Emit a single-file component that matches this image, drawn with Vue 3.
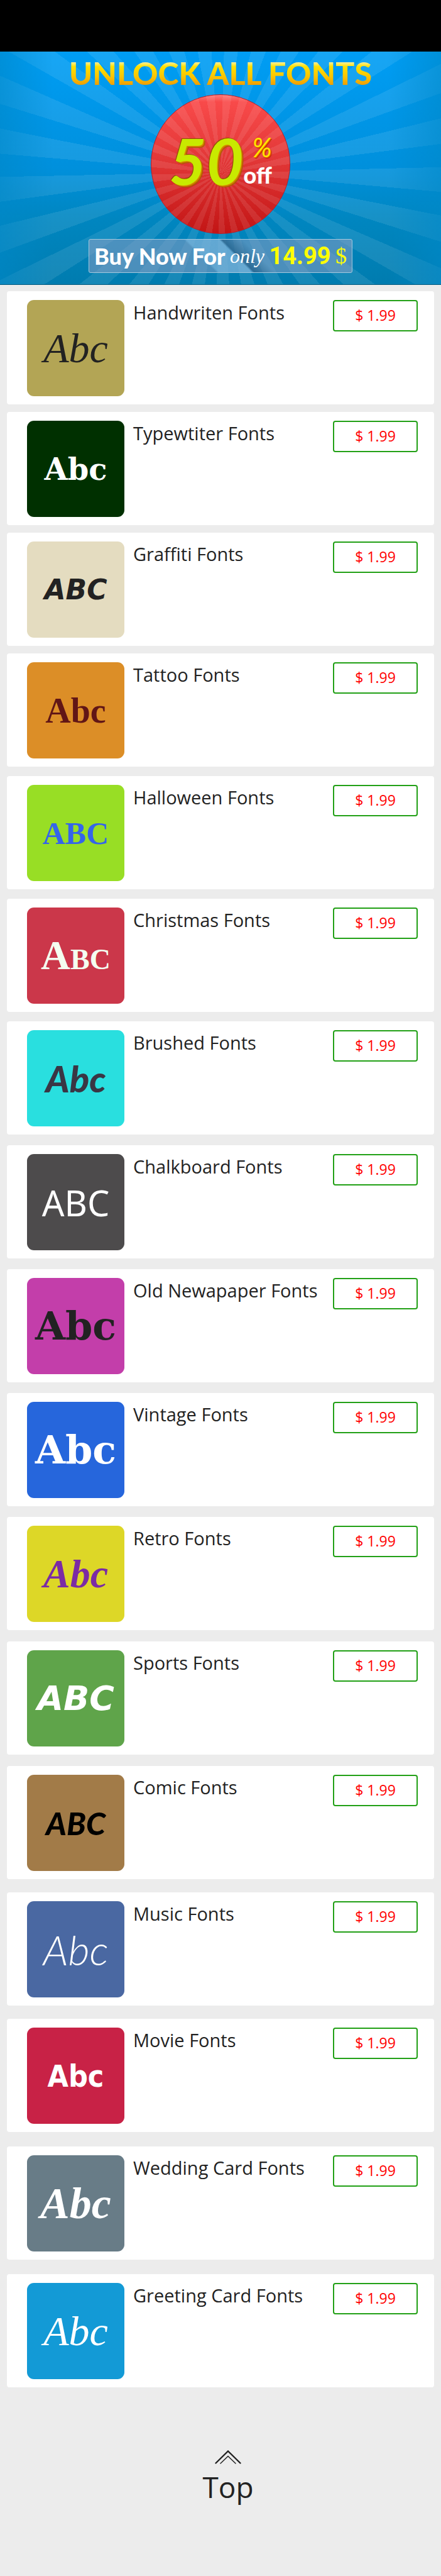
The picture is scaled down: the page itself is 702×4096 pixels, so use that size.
<script setup>
const fonts = [
  { name: 'Handwriten Fonts', sample: 'Abc', style: 'handwritten' },
  { name: 'Typewtiter Fonts', sample: 'Abc', style: 'typewriter' },
  { name: 'Graffiti Fonts', sample: 'ABC', style: 'graffiti' },
  { name: 'Tattoo Fonts', sample: 'Abc', style: 'tattoo' },
  { name: 'Halloween Fonts', sample: 'ABC', style: 'halloween' },
  { name: 'Christmas Fonts', sample: 'Abc', style: 'christmas' },
  { name: 'Brushed Fonts', sample: 'Abc', style: 'brushed' },
  { name: 'Chalkboard Fonts', sample: 'ABC', style: 'chalkboard' },
  { name: 'Old Newapaper Fonts', sample: 'Abc', style: 'newspaper' },
  { name: 'Vintage Fonts', sample: 'Abc', style: 'vintage' },
  { name: 'Retro Fonts', sample: 'Abc', style: 'retro' },
  { name: 'Sports Fonts', sample: 'ABC', style: 'sports' },
  { name: 'Comic Fonts', sample: 'ABC', style: 'comic' },
  { name: 'Music Fonts', sample: 'Abc', style: 'music' },
  { name: 'Movie Fonts', sample: 'Abc', style: 'movie' },
  { name: 'Wedding Card Fonts', sample: 'Abc', style: 'wedding' },
  { name: 'Greeting Card Fonts', sample: 'Abc', style: 'greeting' },
]
const price = '$ 1.99'
</script>

<template>
  <div class="page" id="top">
    <div class="status-bar"></div>

    <header class="banner">
      <h1 class="headline">UNLOCK ALL FONTS</h1>
      <div class="badge">
        <span class="amount">50</span>
        <span class="unit">
          <span class="percent">%</span>
          <span class="off">off</span>
        </span>
      </div>
      <button class="buy" type="button">
        <span class="buy-text">Buy Now For</span>
        <span class="buy-only">only</span>
        <span class="buy-price">14.99</span>
        <span class="buy-dollar">$</span>
      </button>
    </header>

    <main class="list">
      <article v-for="font in fonts" :key="font.name" class="card">
        <div class="tile" :class="font.style">{{ font.sample }}</div>
        <h2 class="name">{{ font.name }}</h2>
        <button class="price" type="button">{{ price }}</button>
      </article>
    </main>

    <footer class="footer">
      <a class="to-top" href="#top">
        <svg class="chevrons" viewBox="0 0 42 22" aria-hidden="true">
          <path d="M1.5 20.5 21 1.5l19.500 19" stroke-width="2.400" />
          <path d="M9 21 21 9.500 33 21" stroke-width="1.500" />
        </svg>
        Top
      </a>
    </footer>
  </div>
</template>

<style>
body {
  margin: 0;
  background: #ececec;
}
</style>

<style scoped>
.page {
  font-family: "Open Sans", "Noto Sans", sans-serif;
  color: #222;
  background: #ececec;
}

.status-bar {
  height: 82px;
  background: #000;
}

/* Banner */
.banner {
  display: flex;
  flex-direction: column;
  align-items: center;
  box-sizing: border-box;
  height: 371px;
  padding-top: 2px;
  border-bottom: 1px solid #00587d;
  background:
    linear-gradient(90deg, rgba(0, 136, 200, 0.6), transparent 12%, transparent 88%, rgba(0, 136, 200, 0.6)),
    repeating-conic-gradient(from 1.8deg at 50% 192px, rgba(255, 255, 255, 0.09) 0deg 6.4deg, transparent 6.4deg 12.41deg),
    linear-gradient(#009df4, #0090dc 50%, #0086c0 72%, #007caf);
}

.headline {
  margin: 0;
  padding-bottom: 2px;
  font-family: Lato, sans-serif;
  font-size: 50px;
  font-weight: 900;
  line-height: 64px;
  white-space: nowrap;
  color: transparent;
  background: linear-gradient(#fff3b0 14px, #ffe000 22px, #fbc400 38px, #f0a000 50px, #f39a00 54px);
  background-clip: text;
  -webkit-background-clip: text;
}

.badge {
  display: flex;
  align-items: center;
  justify-content: center;
  box-sizing: border-box;
  width: 222px;
  height: 222px;
  padding-bottom: 12px;
  border: 1px solid #b3202c;
  border-radius: 50%;
  background:
    linear-gradient(rgba(255, 255, 255, 0.25), transparent 5%),
    repeating-conic-gradient(from 1.8deg at 50% 124px, rgba(255, 255, 255, 0.09) 0deg 6.4deg, transparent 6.4deg 12.41deg),
    linear-gradient(#fb4c4c, #e33838 45%, #c31515);
}

.amount {
  font-family: Lato, sans-serif;
  font-size: 102px;
  font-weight: 700;
  font-style: italic;
  line-height: 102px;
  color: #c8ea00;
  text-shadow: 1px 1px 0 #d88a00, 2px 2px 0 #c87400, 3px 3px 1px #a85a00, -1px -1px 1px #8a5000;
}

.unit {
  display: flex;
  flex-direction: column;
  align-items: flex-end;
  font-family: Lato, sans-serif;
}

.percent {
  font-size: 42px;
  font-style: italic;
  line-height: 46px;
  color: #ffe600;
  text-shadow: 1px 1px 0 #f05a00, 2px 2px 1px #b03000;
}

.off {
  font-size: 36px;
  font-weight: 900;
  line-height: 42px;
  color: #fff;
}

.buy {
  display: flex;
  align-items: center;
  justify-content: space-between;
  box-sizing: border-box;
  width: 420px;
  height: 54px;
  margin-top: 8px;
  padding: 0 8px;
  border: 1px solid #a4c8de;
  border-radius: 3px;
  background:
    linear-gradient(45deg, transparent 43%, rgba(120, 190, 230, 0.5) 44% 55%, rgba(20, 80, 120, 0.55) 56%, transparent 63%),
    rgba(150, 160, 195, 0.5);
  color: #fff;
  white-space: nowrap;
}

.buy-text {
  font-family: Lato, sans-serif;
  font-size: 36px;
  font-weight: 900;
}

.buy-only {
  font-family: "Liberation Serif", serif;
  font-size: 32px;
  font-style: italic;
}

.buy-price {
  font-family: Roboto, sans-serif;
  font-size: 38px;
  font-weight: 700;
  color: #ff0;
}

.buy-dollar {
  font-family: "Liberation Serif", serif;
  font-size: 36px;
  color: #ff0;
}

/* Font packs */
.list {
  padding: 10px 11px 0;
}

.card {
  display: flex;
  align-items: flex-start;
  box-sizing: border-box;
  height: 180px;
  margin-bottom: 12px;
  padding: 14px 26px 0 32px;
  border-radius: 4px;
  background: #fff;
}

.card:nth-child(n + 4) {
  margin-bottom: 15px;
}

.card:nth-child(n + 7) {
  margin-bottom: 17px;
}

.card:nth-child(n + 11) {
  margin-bottom: 18px;
}

.card:nth-child(n + 13) {
  margin-bottom: 21px;
}

.card:nth-child(n + 15) {
  margin-bottom: 23px;
}

.card:last-child {
  margin-bottom: 0;
}

.tile {
  display: flex;
  flex: none;
  align-items: center;
  justify-content: center;
  width: 155px;
  height: 153px;
  border-radius: 11px;
  line-height: 1;
  color: #fff;
}

.name {
  flex: 1;
  margin: 0 0 0 14px;
  font-size: 29px;
  font-weight: 400;
  line-height: 40px;
  white-space: nowrap;
}

.price {
  flex: none;
  box-sizing: border-box;
  width: 135px;
  height: 50px;
  padding: 0 0 3px;
  border: 2px solid #22a016;
  border-radius: 4px;
  background: #fff;
  font-family: inherit;
  font-size: 23px;
  color: #f00;
}

/* Tile samples */
.handwritten {
  background: #b3a555;
  color: #222;
  font: italic 66px "Liberation Serif", serif;
}

.typewriter {
  background: #003000;
  font: bold 48px "DejaVu Serif", serif;
}

.graffiti {
  background: #e4dcc0;
  color: #222;
  font: italic bold 44px "DejaVu Sans", sans-serif;
}

.tattoo {
  background: #dc8e27;
  color: #611616;
  font: bold 56px "Liberation Serif", serif;
}

.halloween {
  background: #98de25;
  color: #3465ea;
  font: bold 50px "Liberation Serif", serif;
}

.christmas {
  background: #cb374a;
  color: #f4fff0;
  font: bold 65px "Liberation Serif", serif;
  font-variant: small-caps;
}

.brushed {
  background: #29dfdf;
  color: #3a3644;
  font: italic 900 58px Lato, sans-serif;
}

.chalkboard {
  background: #4d4b4c;
  font: 56px "Noto Sans", sans-serif;
}

.newspaper {
  background: #c33eaa;
  color: #222;
  font: bold 62px "DejaVu Serif", serif;
}

.vintage {
  background: #2666dc;
  font: bold 62px "DejaVu Serif", serif;
}

.retro {
  background: #ddd727;
  color: #7b2ba4;
  font: italic bold 64px "Liberation Serif", serif;
}

.sports {
  background: #5fa44a;
  font: italic bold 54px "DejaVu Sans", sans-serif;
}

.comic {
  background: #a27b48;
  color: #000;
  font: italic 900 50px Lato, sans-serif;
}

.music {
  background: #4a68a2;
  font: italic 300 66px Lato, sans-serif;
}

.movie {
  background: #c82246;
  font: bold 48px "DejaVu Sans Condensed", sans-serif;
}

.wedding {
  background: #687c87;
  font: italic bold 70px "Liberation Serif", serif;
}

.greeting {
  background: #139ad6;
  font: italic 66px "Liberation Serif", serif;
}

/* Back to top */
.footer {
  display: flex;
  justify-content: center;
  padding: 100px 0 103px 24px;
}

.to-top {
  display: flex;
  flex-direction: column;
  align-items: center;
  gap: 4px;
  font-size: 46px;
  line-height: 64px;
  color: #222;
  text-decoration: none;
}

.chevrons {
  width: 42px;
  height: 22px;
  fill: none;
  stroke: #222;
  stroke-linecap: round;
}
</style>
